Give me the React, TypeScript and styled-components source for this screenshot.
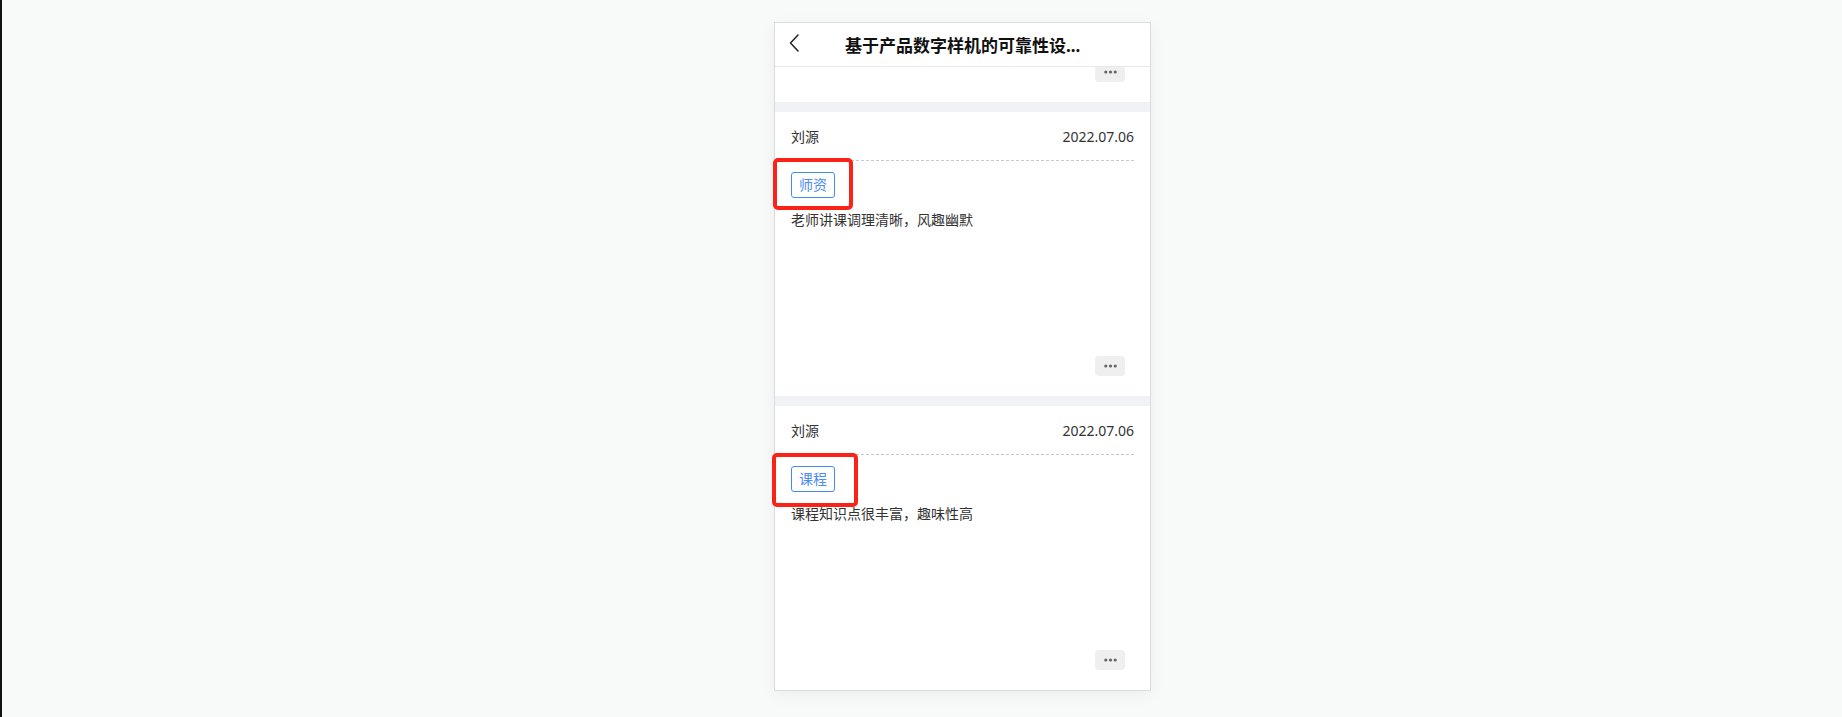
import React from "react";
import styled, { createGlobalStyle } from "styled-components";

const GlobalStyle = createGlobalStyle`
  html, body {
    margin: 0;
    padding: 0;
  }
  body {
    min-height: 717px;
    background: #f8f9f9;
    border-left: 2px solid #111;
    font-family: "Noto Sans", "Noto Sans CJK SC", sans-serif;
    color: #333;
  }
`;

const Page = styled.div`
  padding: 22px 0 0 772px;
`;

const Stage = styled.div`
  position: relative;
  width: 377px;
`;

const Phone = styled.div`
  width: 375px;
  height: 667px;
  border: 1px solid #dcdcdc;
  background: #fff;
  display: flex;
  flex-direction: column;
  box-shadow: 0 4px 16px rgba(0, 0, 0, 0.05);
`;

const NavBar = styled.div`
  flex: 0 0 43px;
  display: flex;
  align-items: center;
  padding-left: 14px;
  border-bottom: 1px solid #e8e8e8;
  background: #fff;
`;

const BackIcon = styled.svg`
  width: 10px;
  height: 18px;
  margin-top: -4px;
`;

const Title = styled.div`
  margin-left: 46px;
  font-family: "Noto Sans", "Noto Sans CJK SC", sans-serif;
  font-size: 17px;
  font-weight: 700;
  color: #111;
  white-space: nowrap;
`;

const List = styled.div`
  flex: 1;
  overflow: hidden;
  background: #f1f2f6;
`;

/* bottom of the previous review, scrolled mostly out of view */
const CardTail = styled.div`
  height: 35px;
  padding: 0 16px 20px;
  box-sizing: border-box;
  background: #fff;
  overflow: hidden;
  display: flex;
  flex-direction: column;
  justify-content: flex-end;
  align-items: flex-end;
`;

const Card = styled.div`
  margin-top: 10px;
  height: 284px;
  padding: 0 16px 20px;
  box-sizing: border-box;
  background: #fff;
  display: flex;
  flex-direction: column;
  align-items: flex-start;
`;

const CardHead = styled.div`
  align-self: stretch;
  height: 48px;
  display: flex;
  align-items: center;
  justify-content: space-between;
  border-bottom: 1px dashed #c8c8c8;
  font-size: 14px;
  color: #333;
`;

const Tag = styled.span`
  margin-top: 11px;
  padding: 0 7px;
  height: 24px;
  line-height: 24px;
  border: 1px solid #3f8cf5;
  border-radius: 3px;
  font-size: 14px;
  color: #4c8cf6;
`;

const Comment = styled.div`
  margin-top: 12px;
  font-size: 14px;
  line-height: 20px;
  color: #333;
`;

const MoreButton = styled.button`
  flex: 0 0 20px;
  margin-top: auto;
  align-self: flex-end;
  margin-right: 9px;
  width: 30px;
  height: 20px;
  padding: 0;
  border: none;
  border-radius: 4px;
  background: #efefef;
  display: flex;
  align-items: center;
  justify-content: center;
`;

const Marker = styled.div<{ $left: number; $top: number; $w: number; $h: number }>`
  position: absolute;
  left: ${({ $left }) => $left}px;
  top: ${({ $top }) => $top}px;
  width: ${({ $w }) => $w}px;
  height: ${({ $h }) => $h}px;
  box-sizing: border-box;
  border: 4px solid #fb2318;
  border-radius: 5px;
  pointer-events: none;
`;

interface Review {
  name: string;
  date: string;
  tag: string;
  text: string;
}

const reviews: Review[] = [
  { name: "刘源", date: "2022.07.06", tag: "师资", text: "老师讲课调理清晰，风趣幽默" },
  { name: "刘源", date: "2022.07.06", tag: "课程", text: "课程知识点很丰富，趣味性高" },
];

function Dots() {
  return (
    <svg width="13" height="4" viewBox="0 0 13 4">
      <circle cx="1.8" cy="2" r="1.6" fill="#666" />
      <circle cx="6.5" cy="2" r="1.6" fill="#666" />
      <circle cx="11.2" cy="2" r="1.6" fill="#666" />
    </svg>
  );
}

function ReviewCard({ review }: { review: Review }) {
  return (
    <Card>
      <CardHead>
        <span>{review.name}</span>
        <span>{review.date}</span>
      </CardHead>
      <Tag>{review.tag}</Tag>
      <Comment>{review.text}</Comment>
      <MoreButton>
        <Dots />
      </MoreButton>
    </Card>
  );
}

export default function App() {
  return (
    <>
      <GlobalStyle />
      <Page>
        <Stage>
          <Phone>
            <NavBar>
              <BackIcon viewBox="0 0 10 18">
                <path
                  d="M9 1 L1.5 9 L9 17"
                  fill="none"
                  stroke="#222"
                  strokeWidth="1.5"
                  strokeLinecap="round"
                  strokeLinejoin="round"
                />
              </BackIcon>
              <Title>基于产品数字样机的可靠性设...</Title>
            </NavBar>
            <List>
              <CardTail>
                <MoreButton>
                  <Dots />
                </MoreButton>
              </CardTail>
              {reviews.map((r, i) => (
                <ReviewCard key={i} review={r} />
              ))}
            </List>
          </Phone>
          <Marker $left={-1} $top={136} $w={80} $h={52} />
          <Marker $left={-2} $top={431} $w={86} $h={54} />
        </Stage>
      </Page>
    </>
  );
}
